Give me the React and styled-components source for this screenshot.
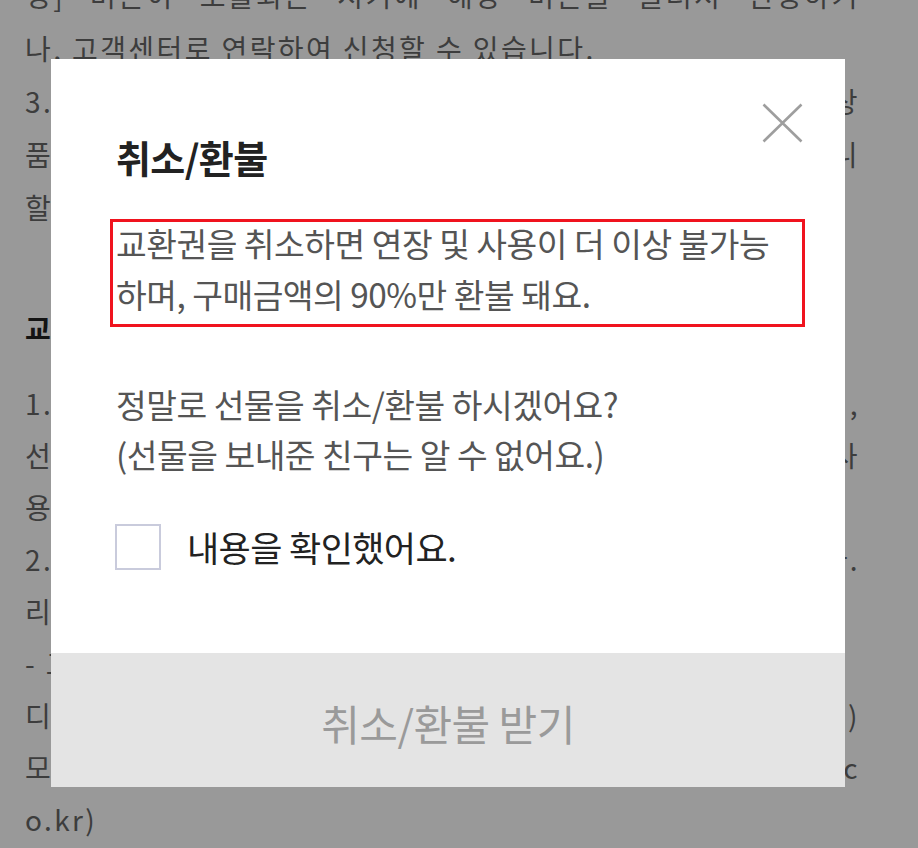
import React from "react";
import styled, { createGlobalStyle } from "styled-components";

const GlobalStyle = createGlobalStyle`
  html, body {
    margin: 0;
    padding: 0;
    background: #fff;
    font-family: "Noto Sans CJK KR", "Noto Sans", sans-serif;
  }
`;

const Page = styled.div`
  width: 918px;
  height: 848px;
  overflow: hidden;
  padding: 0 58px 0 25px;
  box-sizing: border-box;
  color: #666;
  font-size: 28px;
  letter-spacing: 2.4px;
`;

const Para = styled.div`
  margin-top: ${(p) => p.$gap}px;
`;

const Line = styled.div`
  line-height: ${(p) => p.$lh || 53}px;
  height: ${(p) => p.$lh || 53}px;
  white-space: nowrap;
  overflow: hidden;
  text-align: ${(p) => (p.$justify ? "justify" : "left")};
  text-align-last: ${(p) => (p.$justify ? "justify" : "auto")};
  font-weight: ${(p) => (p.$bold ? 700 : 400)};
  color: ${(p) => (p.$bold ? "#222" : "inherit")};
`;

const Overlay = styled.div`
  position: fixed;
  inset: 0;
  background: rgba(0, 0, 0, 0.4);
  display: flex;
  align-items: flex-start;
  padding: 59px 0 0 51px;
`;

const Modal = styled.div`
  position: relative;
  width: 794px;
  height: 728px;
  background: #fff;
  display: flex;
  flex-direction: column;
`;

const Body = styled.div`
  flex: 1;
  padding: 76px 40px 0 59px;
  display: flex;
  flex-direction: column;
`;

const Title = styled.h2`
  margin: 0;
  padding-left: 6px;
  font-size: 38px;
  line-height: 44px;
  font-weight: 700;
  letter-spacing: -0.6px;
  color: #222;
`;

const Notice = styled.div`
  margin-top: 40px;
  border: 3px solid #f0131e;
  padding: 0 3px 5px;
`;

const NoticeText = styled.p`
  margin: -5px 0 0;
  font-size: 33.4px;
  line-height: 51px;
  letter-spacing: -0.5px;
  white-space: nowrap;
  color: #555;
`;

const Question = styled.p`
  margin: 52px 0 0;
  padding-left: 6px;
  font-size: 33.4px;
  line-height: 50px;
  letter-spacing: -0.5px;
  white-space: nowrap;
  color: #555;
`;

const CheckRow = styled.label`
  margin-top: 45px;
  padding-left: 5px;
  display: flex;
  align-items: center;
  gap: 26px;
  height: 46px;
  cursor: pointer;
`;

const Box = styled.span`
  width: 46px;
  height: 46px;
  box-sizing: border-box;
  border: 2px solid #c9cbdc;
  background: #fff;
`;

const CheckLabel = styled.span`
  font-size: 35px;
  line-height: 46px;
  letter-spacing: -0.6px;
  color: #222;
`;

const Footer = styled.button`
  height: 134px;
  border: 0;
  background: #e4e4e4;
  padding: 4px 0 0;
  font-family: inherit;
  font-size: 42px;
  letter-spacing: -0.5px;
  color: #9a9a9a;
`;

const Close = styled.button`
  position: absolute;
  top: 44px;
  right: 42px;
  width: 41px;
  height: 40px;
  padding: 0;
  border: 0;
  background: none;
`;

function CloseIcon() {
  return (
    <svg width="41" height="40" viewBox="0 0 41 40">
      <path d="M1.5 1.5 L39.5 38.5 M39.5 1.5 L1.5 38.5" stroke="#9e9e9e" strokeWidth="2.6" fill="none" />
    </svg>
  );
}

function Background() {
  return (
    <Page>
      <Para $gap={-31}>
        <Line $justify>정] 버튼이 노출되는 시기에 해당 버튼을 눌러서 신청하거</Line>
        <Line>나, 고객센터로 연락하여 신청할 수 있습니다.</Line>
        <Line $justify>3. 유효기간이 만료된 교환권은 금액의 90%가 환불되며, 상</Line>
        <Line $justify>품권은 유효기간이 지나도 미사용 시 환불 신청이 가능하니</Line>
        <Line>할인 상품은 할인 금액을 제외하고 환불됩니다.</Line>
      </Para>
      <Para $gap={68}>
        <Line $bold>교환권 취소/환불 안내</Line>
      </Para>
      <Para $gap={22}>
        <Line $lh={52} $justify>1. 선물 교환권을 취소/환불하면 보낸 친구에게 환불되며,</Line>
        <Line $lh={52} $justify>선물을 받은 친구의 교환권은 연장 및 사용이 불가능하며 사</Line>
        <Line $lh={52}>용 중인 교환권은 취소할 수 없습니다.</Line>
        <Line $lh={52} $justify>2. 취소/환불은 유효기간 내 선물함에서 신청 가능합니다.</Line>
        <Line $lh={52}>리워드로 받은 교환권은 취소/환불 대상에서 제외됩니다.</Line>
        <Line $lh={52}>- 고객센터 문의 안내</Line>
        <Line $lh={52} $justify>디지털 상품 문의는 고객센터로 연락 주세요 (cs.kakao.com)</Line>
        <Line $lh={52} $justify>모바일에서는 설정 &gt; 고객센터 (https://cs.kakao.c</Line>
        <Line $lh={52}>o.kr)</Line>
      </Para>
    </Page>
  );
}

export default function App() {
  return (
    <>
      <GlobalStyle />
      <Background />
      <Overlay>
        <Modal>
          <Close aria-label="닫기">
            <CloseIcon />
          </Close>
          <Body>
            <Title>취소/환불</Title>
            <Notice>
              <NoticeText>
                교환권을 취소하면 연장 및 사용이 더 이상 불가능
                <br />
                하며, 구매금액의 90%만 환불 돼요.
              </NoticeText>
            </Notice>
            <Question>
              정말로 선물을 취소/환불 하시겠어요?
              <br />
              (선물을 보내준 친구는 알 수 없어요.)
            </Question>
            <CheckRow>
              <Box />
              <CheckLabel>내용을 확인했어요.</CheckLabel>
            </CheckRow>
          </Body>
          <Footer>취소/환불 받기</Footer>
        </Modal>
      </Overlay>
    </>
  );
}
